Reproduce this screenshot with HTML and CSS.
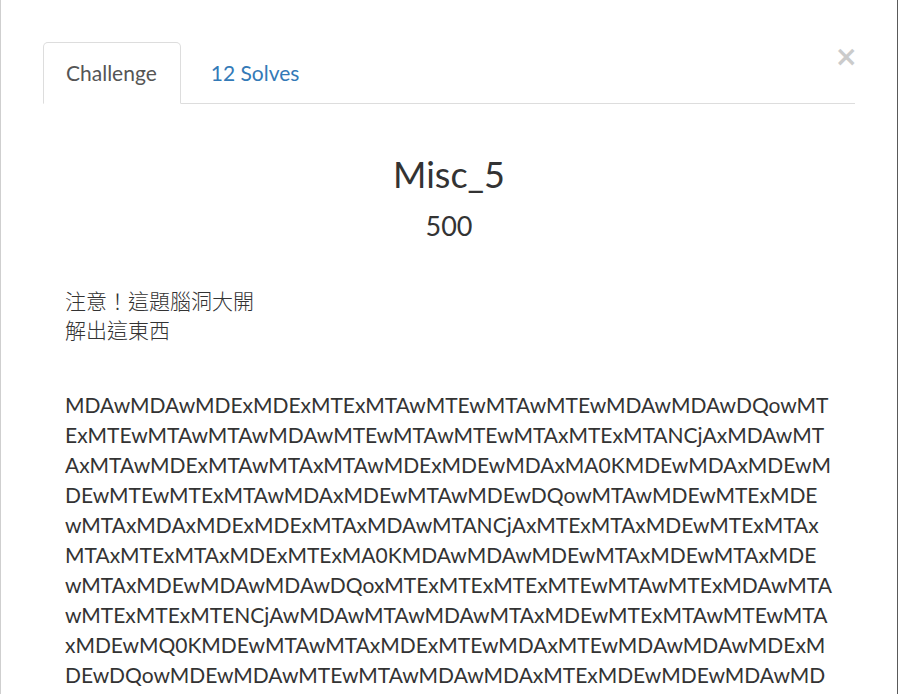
FILE: index.html
```html
<!DOCTYPE html>
<html lang="zh-Hant">
<head>
<meta charset="utf-8">
<title>Misc_5</title>
<link rel="stylesheet" href="styles.css">
</head>
<body>
<div class="modal">
  <div class="modal-body">
    <div class="nav-row">
      <ul class="nav-tabs">
        <li class="tab active"><a href="#challenge">Challenge</a></li>
        <li class="tab"><a href="#solves">12 Solves</a></li>
      </ul>
      <button class="close" type="button" aria-label="Close">×</button>
    </div>
    <div class="challenge">
      <h3 class="chal-name">Misc_5</h3>
      <h4 class="chal-value">500</h4>
      <div class="chal-desc">
        <p class="note">注意！這題腦洞大開<br>解出這東西</p>
        <p class="payload"><span>MDAwMDAwMDExMDExMTExMTAwMTEwMTAwMTEwMDAwMDAwDQowMT</span><span>ExMTEwMTAwMTAwMDAwMTEwMTAwMTEwMTAxMTExMTANCjAxMDAwMT</span><span>AxMTAwMDExMTAwMTAxMTAwMDExMDEwMDAxMA0KMDEwMDAxMDEwM</span><span>DEwMTEwMTExMTAwMDAxMDEwMTAwMDEwDQowMTAwMDEwMTExMDE</span><span>wMTAxMDAxMDExMDExMTAxMDAwMTANCjAxMTExMTAxMDEwMTExMTAx</span><span>MTAxMTExMTAxMDExMTExMA0KMDAwMDAwMDEwMTAxMDEwMTAxMDE</span><span>wMTAxMDEwMDAwMDAwDQoxMTExMTExMTExMTEwMTAwMTExMDAwMTA</span><span>wMTExMTExMTENCjAwMDAwMTAwMDAwMTAxMDEwMTExMTAwMTEwMTA</span><span>xMDEwMQ0KMDEwMTAwMTAxMDExMTEwMDAxMTEwMDAwMDAwMDExM</span><span>DEwDQowMDEwMDAwMTEwMTAwMDAwMDAxMTExMDEwMDEwMDAwMD</span><span>AxMTEwMDExMTAwMDEwMDExMA0K</span></p>
      </div>
    </div>
  </div>
</div>
</body>
</html>
```

FILE: styles.css
```css
* { box-sizing: border-box; }
html, body { margin: 0; padding: 0; background: #fff; }
body {
  font-family: Lato, "Noto Sans CJK TC", sans-serif;
  font-size: 21px;
  line-height: 30px;
  color: #333;
}
.modal {
  min-height: 694px;
  border-left: 1px solid #cfcfcf;
  border-right: 1px solid #5a5a5a;
  overflow: hidden;
}
.modal-body {
  padding: 42px 42px 0 42px;
}
.nav-row {
  display: flex;
  align-items: flex-start;
  border-bottom: 1px solid #ddd;
}
.nav-tabs {
  list-style: none;
  margin: 0 0 -1px 0;
  padding: 0;
  display: flex;
}
.tab { margin-right: 7px; }
.tab a {
  display: block;
  padding: 15px 22px 15px 22px;
  border: 1px solid transparent;
  border-radius: 5px 5px 0 0;
  color: #337ab7;
  text-decoration: none;
}
.tab.active a {
  padding-right: 23px;
  color: #555;
  background: #fff;
  border-color: #ddd #ddd transparent #ddd;
}
.close {
  margin-left: auto;
  margin-top: 1px;
  margin-right: -3px;
  padding: 0;
  border: 0;
  background: none;
  font-family: "DejaVu Sans", sans-serif;
  font-size: 28px;
  line-height: 1;
  font-weight: bold;
  color: #000;
  opacity: 0.2;
  cursor: pointer;
}
.challenge {
  padding: 0 22px;
}
.chal-name {
  margin: 51px 0 0;
  font-size: 36px;
  font-weight: 400;
  line-height: 1.1;
  text-align: center;
}
.chal-value {
  margin: 16px 0 0;
  font-size: 27px;
  font-weight: 400;
  line-height: 1.1;
  text-align: center;
}
.chal-desc { margin-top: 46px; }
.note {
  margin: 0 0 46px;
  line-height: 29px;
  font-weight: 300;
}
.payload {
  margin: 0;
}
.payload span {
  display: block;
  white-space: nowrap;
}
```
